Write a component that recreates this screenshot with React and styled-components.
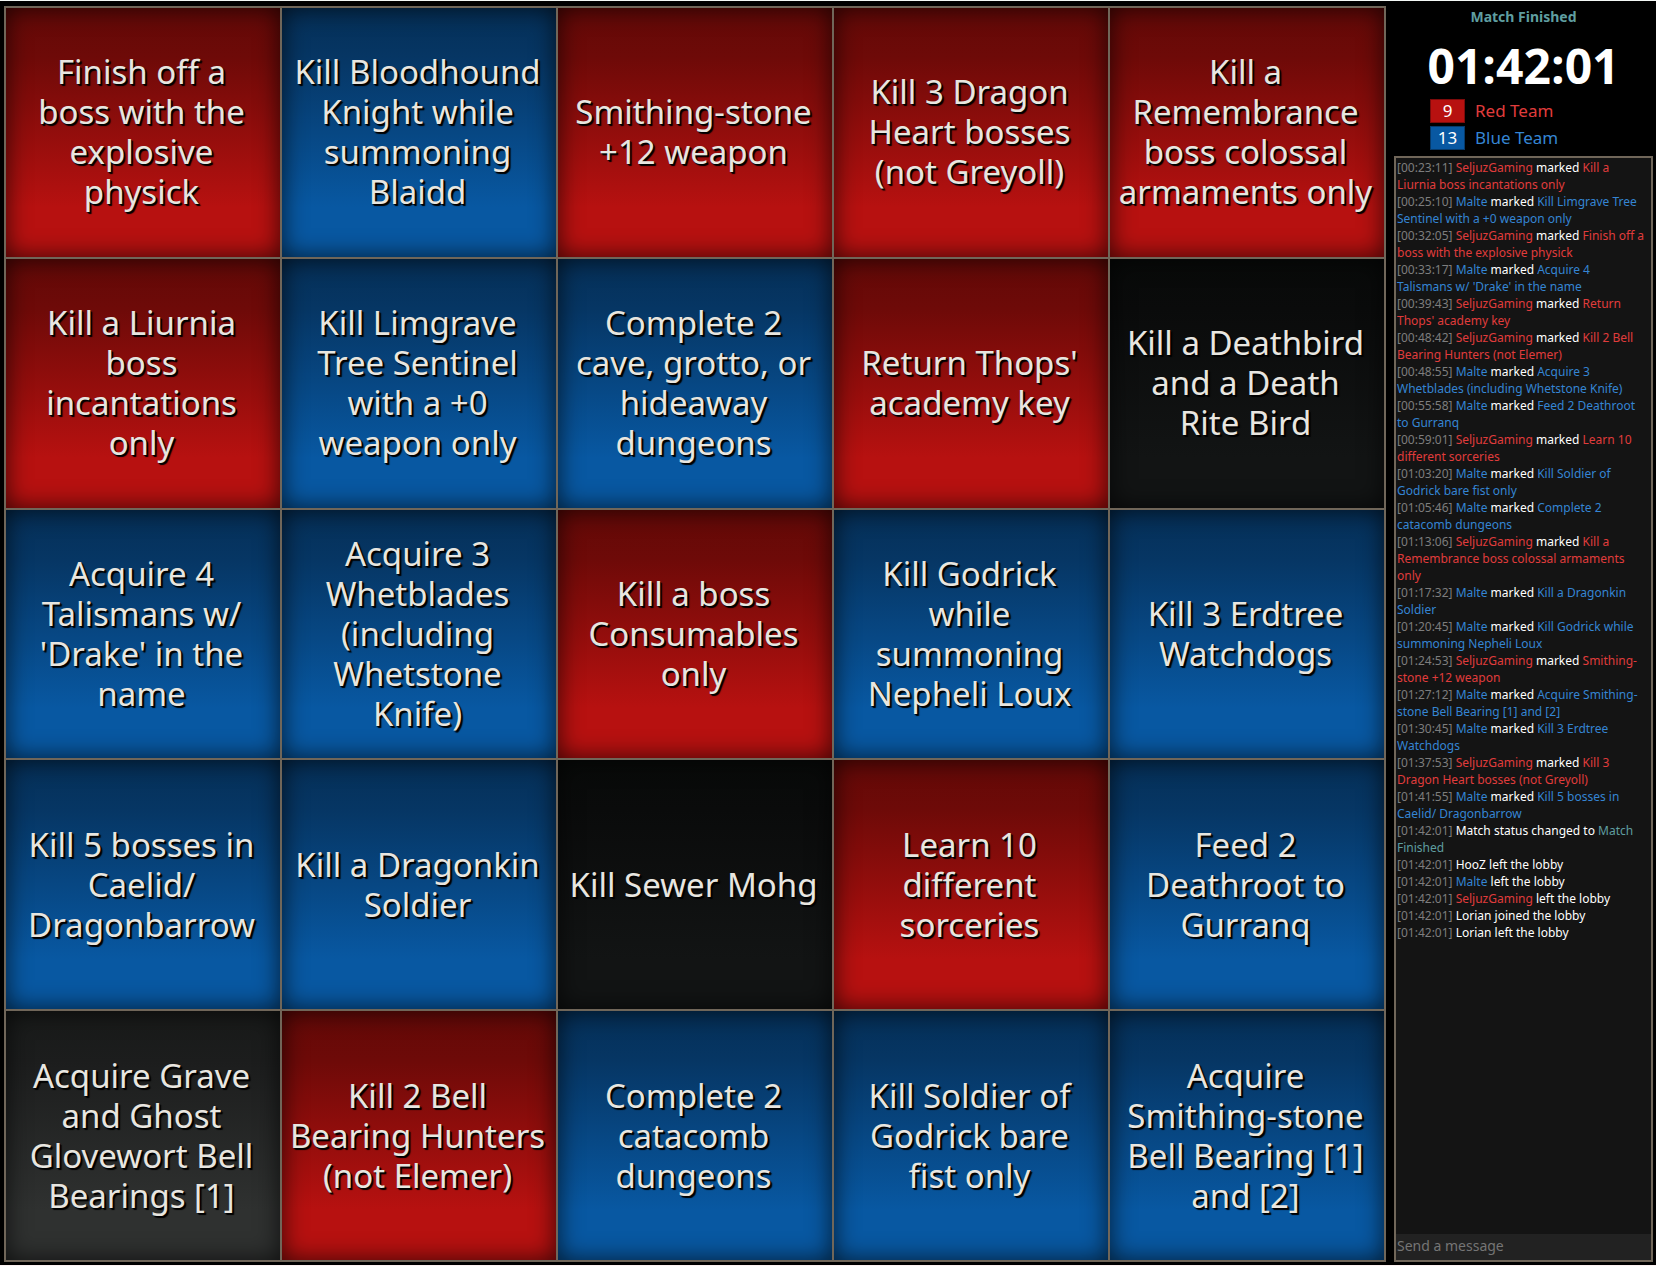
import React from "react";
import styled, { createGlobalStyle } from "styled-components";

const palette = {
  red: "#e03c3c",
  blue: "#3585d3",
  status: "#5f9ea0",
  time: "#7d7d7d",
  plain: "#ffffff",
  frame: "#706659",
};

const fills = {
  red: "linear-gradient(#620907, #6e0a08 20%, #b71110 80%)",
  blue: "linear-gradient(#052f57, #063664 20%, #0858a2 80%)",
  none: "linear-gradient(#080a09, #0a0b0b 20%, #121414 80%)",
  hover: "linear-gradient(#181a19, #1c1d1d 20%, #2f3130 80%)",
};

const Global = createGlobalStyle`
  * { box-sizing: border-box; }
  body {
    margin: 0;
    background: #000;
    font-family: "Noto Sans", "Open Sans", sans-serif;
  }
`;

const Page = styled.main`
  display: grid;
  grid-template-columns: minmax(0, 1fr) 259px;
  gap: 8px;
  height: 100vh;
  min-height: 800px;
  padding: 5px 3px 3px 4px;
  border-top: 1px solid #f4f8f6;
  border-bottom: 1px solid #fdf2f2;
`;

const Board = styled.section`
  display: grid;
  grid-template-columns: repeat(5, minmax(0, 1fr));
  grid-template-rows: repeat(5, minmax(0, 1fr));
  gap: 2px;
  padding: 2px;
  background: ${palette.frame};
`;

const Square = styled.button`
  display: flex;
  align-items: center;
  justify-content: center;
  padding: 0 3px 0 0;
  border: 0;
  background: ${(p) => fills[p.$fill]};
  box-shadow: inset 0 0 24px rgba(0, 0, 0, 0.7);
  color: #e8e6e0;
  font: 33px/40px "Noto Sans", "Open Sans", sans-serif;
  text-align: center;
  text-shadow: 1px 1px 1px #000, 2px 2px 1px #000;
  white-space: pre;
`;

const Side = styled.aside`
  display: flex;
  flex-direction: column;
  min-height: 0;
`;

const Status = styled.h1`
  margin: 0;
  color: ${palette.status};
  font-size: 14px;
  line-height: 22px;
  text-align: center;
`;

const Timer = styled.div`
  margin: 6px 0 1px;
  color: #fff;
  font: bold 48px/64px "Open Sans", "Noto Sans", sans-serif;
  text-align: center;
`;

const Teams = styled.ul`
  display: grid;
  gap: 3px;
  margin: 0 0 6px;
  padding: 0 0 0 36px;
  list-style: none;
`;

const Team = styled.li`
  display: flex;
  align-items: center;
  gap: 10px;
  color: ${(p) => palette[p.$team]};
  font-size: 17px;
  line-height: 24px;
`;

const Score = styled.span`
  width: 35px;
  height: 24px;
  border: 1px solid ${(p) => (p.$team === "red" ? "#7c0b0b" : "#063a6b")};
  background: ${(p) => (p.$team === "red" ? "#b71110" : "#0858a2")};
  color: #fff;
  line-height: 22px;
  text-align: center;
`;

const Chat = styled.section`
  display: flex;
  flex: 1;
  flex-direction: column;
  min-height: 0;
  border: 2px solid ${palette.frame};
  background: #141414;
`;

const Log = styled.ol`
  flex: 1;
  min-height: 0;
  margin: 0;
  padding: 1px 0 0 1px;
  overflow: hidden;
  list-style: none;
  font-size: 12px;
  line-height: 17px;
  white-space: pre;
`;

const Ink = styled.span`
  color: ${(p) => palette[p.$tone]};
`;

const Message = styled.input`
  height: 26px;
  padding: 0 1px 3px;
  border: 0;
  outline: 0;
  background: #222;
  color: #fff;
  font: 14px/20px "Noto Sans", "Open Sans", sans-serif;
  &::placeholder { color: #757575; opacity: 1; }
`;

const squares = [
  ["red", "Finish off a\nboss with the\nexplosive\nphysick"],
  ["blue", "Kill Bloodhound\nKnight while\nsummoning\nBlaidd"],
  ["red", "Smithing-stone\n+12 weapon"],
  ["red", "Kill 3 Dragon\nHeart bosses\n(not Greyoll)"],
  ["red", "Kill a\nRemembrance\nboss colossal\narmaments only"],
  ["red", "Kill a Liurnia\nboss\nincantations\nonly"],
  ["blue", "Kill Limgrave\nTree Sentinel\nwith a +0\nweapon only"],
  ["blue", "Complete 2\ncave, grotto, or\nhideaway\ndungeons"],
  ["red", "Return Thops'\nacademy key"],
  ["none", "Kill a Deathbird\nand a Death\nRite Bird"],
  ["blue", "Acquire 4\nTalismans w/\n'Drake' in the\nname"],
  ["blue", "Acquire 3\nWhetblades\n(including\nWhetstone\nKnife)"],
  ["red", "Kill a boss\nConsumables\nonly"],
  ["blue", "Kill Godrick\nwhile\nsummoning\nNepheli Loux"],
  ["blue", "Kill 3 Erdtree\nWatchdogs"],
  ["blue", "Kill 5 bosses in\nCaelid/\nDragonbarrow"],
  ["blue", "Kill a Dragonkin\nSoldier"],
  ["none", "Kill Sewer Mohg"],
  ["red", "Learn 10\ndifferent\nsorceries"],
  ["blue", "Feed 2\nDeathroot to\nGurranq"],
  ["hover", "Acquire Grave\nand Ghost\nGlovewort Bell\nBearings [1]"],
  ["red", "Kill 2 Bell\nBearing Hunters\n(not Elemer)"],
  ["blue", "Complete 2\ncatacomb\ndungeons"],
  ["blue", "Kill Soldier of\nGodrick bare\nfist only"],
  ["blue", "Acquire\nSmithing-stone\nBell Bearing [1]\nand [2]"],
];

const players = { SeljuzGaming: "red", Malte: "blue" };

const marks = [
  ["00:23:11", "SeljuzGaming", "Kill a\nLiurnia boss incantations only"],
  ["00:25:10", "Malte", "Kill Limgrave Tree\nSentinel with a +0 weapon only"],
  ["00:32:05", "SeljuzGaming", "Finish off a\nboss with the explosive physick"],
  ["00:33:17", "Malte", "Acquire 4\nTalismans w/ 'Drake' in the name"],
  ["00:39:43", "SeljuzGaming", "Return\nThops' academy key"],
  ["00:48:42", "SeljuzGaming", "Kill 2 Bell\nBearing Hunters (not Elemer)"],
  ["00:48:55", "Malte", "Acquire 3\nWhetblades (including Whetstone Knife)"],
  ["00:55:58", "Malte", "Feed 2 Deathroot\nto Gurranq"],
  ["00:59:01", "SeljuzGaming", "Learn 10\ndifferent sorceries"],
  ["01:03:20", "Malte", "Kill Soldier of\nGodrick bare fist only"],
  ["01:05:46", "Malte", "Complete 2\ncatacomb dungeons"],
  ["01:13:06", "SeljuzGaming", "Kill a\nRemembrance boss colossal armaments\nonly"],
  ["01:17:32", "Malte", "Kill a Dragonkin\nSoldier"],
  ["01:20:45", "Malte", "Kill Godrick while\nsummoning Nepheli Loux"],
  ["01:24:53", "SeljuzGaming", "Smithing-\nstone +12 weapon"],
  ["01:27:12", "Malte", "Acquire Smithing-\nstone Bell Bearing [1] and [2]"],
  ["01:30:45", "Malte", "Kill 3 Erdtree\nWatchdogs"],
  ["01:37:53", "SeljuzGaming", "Kill 3\nDragon Heart bosses (not Greyoll)"],
  ["01:41:55", "Malte", "Kill 5 bosses in\nCaelid/ Dragonbarrow"],
];

const lobby = [
  ["HooZ", "left"],
  ["Malte", "left"],
  ["SeljuzGaming", "left"],
  ["Lorian", "joined"],
  ["Lorian", "left"],
];

const Time = ({ children }) => <Ink $tone="time">[{children}] </Ink>;
const Player = ({ name }) => <Ink $tone={players[name] || "plain"}>{name}</Ink>;
const Lines = ({ tone, text }) =>
  text.split("\n").map((line, i) => (
    <React.Fragment key={line}>
      {i > 0 && <br />}
      <Ink $tone={tone}>{line}</Ink>
    </React.Fragment>
  ));

export default function App() {
  return (
    <>
      <Global />
      <Page>
        <Board aria-label="Bingo board">
          {squares.map(([fill, text]) => (
            <Square key={text + fill} type="button" $fill={fill}>{text}</Square>
          ))}
        </Board>
        <Side>
          <Status>Match Finished</Status>
          <Timer>01:42:01</Timer>
          <Teams>
            <Team $team="red"><Score $team="red">9</Score>Red Team</Team>
            <Team $team="blue"><Score $team="blue">13</Score>Blue Team</Team>
          </Teams>
          <Chat>
            <Log>
              {marks.map(([time, name, goal]) => (
                <li key={time}>
                  <Time>{time}</Time>
                  <Player name={name} />
                  <Ink $tone="plain"> marked </Ink>
                  <Lines tone={players[name]} text={goal} />
                </li>
              ))}
              <li>
                <Time>01:42:01</Time>
                <Ink $tone="plain">Match status changed to </Ink>
                <Lines tone="status" text={"Match\nFinished"} />
              </li>
              {lobby.map(([name, verb]) => (
                <li key={name + verb}>
                  <Time>01:42:01</Time>
                  <Player name={name} />
                  <Ink $tone="plain"> {verb} the lobby</Ink>
                </li>
              ))}
            </Log>
            <Message type="text" placeholder="Send a message" aria-label="Send a message" />
          </Chat>
        </Side>
      </Page>
    </>
  );
}
